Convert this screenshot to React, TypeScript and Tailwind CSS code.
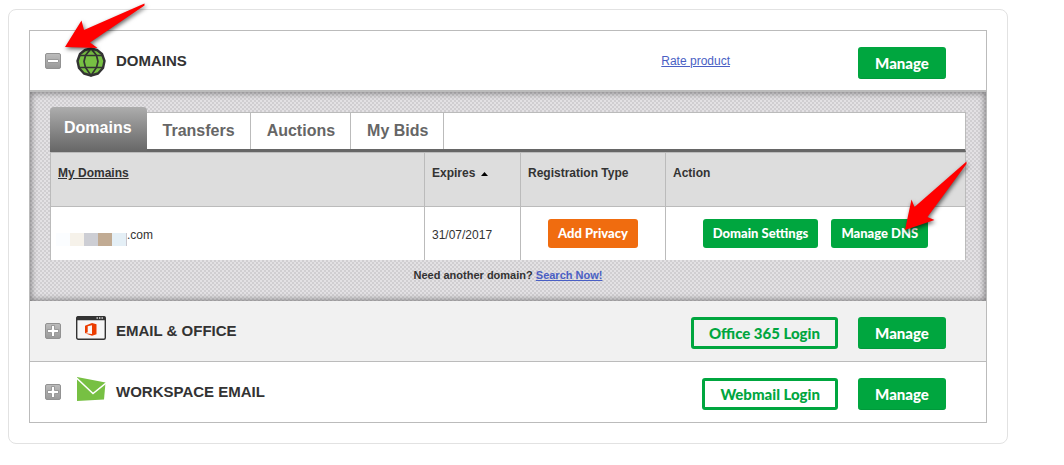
import React from 'react';

type Product = {
  name: string;
  icon: React.ReactNode;
  login: string;
  shaded: boolean;
};

const tabs = ['Transfers', 'Auctions', 'My Bids'];

const maskColors = ['bg-[#fbfdff]', 'bg-[#f6f2ea]', 'bg-[#cdced4]', 'bg-[#c1ab93]', 'bg-[#e4eff6]'];

function GlobeIcon() {
  return (
    <svg viewBox="0 0 30 30" className="h-[30px] w-[30px] shrink-0" fill="none" stroke="#333" strokeWidth="1.7" aria-hidden="true">
      <path d="M15 1.5 21 3 26 7 28.5 14 27 21 22 26.500 15 28.500 8 26.500 3 21 1.500 14 4 7 9 3Z" fill="#77c043" strokeWidth="2.4" strokeLinejoin="round" />
      <path d="M3.500 8.500h23M2.500 20.500h25" />
      <path d="M15 1.500 9.500 8.500 8 14.500 9.500 20.500 15 28.500 20.500 20.500 22 14.500 20.500 8.500Z" />
    </svg>
  );
}

function OfficeIcon() {
  return (
    <svg viewBox="0 0 30 24" className="h-6 w-[30px] shrink-0" aria-hidden="true">
      <rect x="0.700" y="0.700" width="28.600" height="22.600" rx="1.500" fill="#f6f6f6" stroke="#333" strokeWidth="1.400" />
      <path d="M0.500 1.500Q.5.300 2 .3H28Q29.500.3 29.500 1.500V4.300H.5Z" fill="#333" />
      <path d="M20.500 2h1.400M23 2h1.400M25.500 2h1.400" stroke="#ddd" strokeWidth="1.300" />
      <path d="M9 9.800 16 7 20.500 8.300V18.300L16 19.700 9 17.200 16 18V9.200L11.700 10.200V16.200L9 17.200Z" fill="#eb3c00" />
    </svg>
  );
}

function EnvelopeIcon() {
  return (
    <svg viewBox="0 0 30 24" className="h-6 w-[30px] shrink-0" aria-hidden="true">
      <path d="M1 0 29.500 5.500 28 22.500 1 24Z" fill="#77c043" />
      <path d="M0 .5 17 16.500 30 6" fill="none" stroke="#fff" strokeWidth="1.500" />
    </svg>
  );
}

function Toggle({ label, open = false }: { label: string; open?: boolean }) {
  return (
    <button type="button" aria-label={label} aria-expanded={open} className="block h-4 w-4">
      <svg viewBox="0 0 16 16" className="h-4 w-4" aria-hidden="true">
        <defs>
          <linearGradient id="toggle" x2="0" y2="1">
            <stop stopColor="#bdbdbd" />
            <stop offset="1" stopColor="#999" />
          </linearGradient>
        </defs>
        <rect x="0.500" y="0.500" width="15" height="15" rx="1.500" fill="url(#toggle)" stroke="#929292" />
        {open ? (
          <rect x="2.500" y="6.500" width="11" height="3" rx="0.500" fill="#fff" stroke="#8a8a8a" strokeWidth="0.800" />
        ) : (
          <path d="M6.500 2.500h3v4h4v3h-4v4h-3v-4h-4v-3h4Z" fill="#fff" stroke="#8a8a8a" strokeWidth="0.800" />
        )}
      </svg>
    </button>
  );
}

function ManageButton() {
  return (
    <button type="button" className="h-8 w-[88px] rounded-[3px] border-b border-[#009a3b] bg-[#00a63f] font-[Lato,sans-serif] text-[15px] leading-4 font-black text-white">
      Manage
    </button>
  );
}

function ProductRow({ name, icon, login, shaded }: Product) {
  return (
    <div className={`flex items-start border-[#bbb] pt-4 pr-10 pb-3 pl-[15px] ${shaded ? 'border-b bg-[#f1f1f1]' : 'bg-white'}`}>
      <div className="mt-[6px]"><Toggle label={`Expand ${name}`} /></div>
      <div className="-mt-px ml-[15px]">{icon}</div>
      <h2 className="mt-[5px] ml-[10px] flex-1 text-[15px] leading-[18px] font-bold">{name}</h2>
      <button type="button" className="mr-5 h-8 rounded-[3px] border-[3px] border-[#00a63f] px-[15px] font-[Lato,sans-serif] text-[15px] leading-4 font-black text-[#00a63f]">
        {login}
      </button>
      <ManageButton />
    </div>
  );
}

function DomainsPanel() {
  return (
    <div className="bg-[#e3e1e4] bg-[radial-gradient(circle_at_1px_1px,#d0ced1_1px,transparent_1px),radial-gradient(circle_at_3px_3px,#d0ced1_1px,transparent_1px)] bg-[size:4px_4px]">
      <div className="px-5 pt-[15px] pb-[18px] shadow-[inset_0_0_6px_1px_rgba(0,0,0,0.45)]">
        <div className="flex items-end" role="tablist">
          <button type="button" role="tab" aria-selected="true" className="h-[45px] rounded-t-[4px] bg-linear-to-b from-[#adadad] to-[#666] pr-[15px] pb-1 pl-[14px] text-base font-bold text-white">
            Domains
          </button>
          <div className="flex h-10 flex-1 border-t border-r border-b-[3px] border-t-[#bbb] border-r-[#bbb] border-b-[#666] bg-white">
            {tabs.map((tab) => (
              <button key={tab} type="button" role="tab" aria-selected="false" className="border-r border-[#bbb] pr-[15px] pl-4 text-base font-bold text-[#666]">
                {tab}
              </button>
            ))}
          </div>
        </div>
        <table className="w-full table-fixed border-separate border-spacing-0 border-t border-r border-[#bbb] bg-white text-left text-xs [&_td]:border-l [&_td]:border-[#bbb] [&_th]:border-b [&_th]:border-l [&_th]:border-[#bbb]">
          <colgroup>
            <col />
            <col className="w-[96px]" />
            <col className="w-[145px]" />
            <col className="w-[300px]" />
          </colgroup>
          <thead>
            <tr className="h-[54px] bg-[#ddd] align-top [&>th]:px-[7px] [&>th]:pt-3">
              <th><a href="#domains" className="underline">My Domains</a></th>
              <th>
                Expires
                <svg viewBox="0 0 7 4" className="ml-[6px] inline-block h-1 w-[7px]" aria-hidden="true">
                  <path d="M3.500 0 7 4H0Z" fill="#000" />
                </svg>
              </th>
              <th>Registration Type</th>
              <th>Action</th>
            </tr>
          </thead>
          <tbody>
            <tr className="h-[53px]">
              <td className="pt-[6px] pl-[5px]">
                <div className="flex items-start">
                  <div className="mt-[6px] flex h-[13px]">
                    {maskColors.map((color) => <span key={color} className={`w-[14px] ${color}`} />)}
                    <span className="w-px bg-[#c9c7cf]" />
                  </div>
                  <span>.com</span>
                </div>
              </td>
              <td className="pt-[2px] pl-[7px]">31/07/2017</td>
              <td className="text-center">
                <button type="button" className="h-[29px] rounded-[3px] bg-[#f06c0f] px-[10px] font-[Lato,sans-serif] text-[13px] font-black text-white">Add Privacy</button>
              </td>
              <td>
                <div className="flex justify-center gap-[13px]">
                  <button type="button" className="h-[29px] rounded-[3px] bg-[#00a63f] px-[10px] font-[Lato,sans-serif] text-[13px] font-black text-white">Domain Settings</button>
                  <div className="relative">
                    <button type="button" className="h-[29px] rounded-[3px] bg-[#00a63f] px-[10px] font-[Lato,sans-serif] text-[13px] font-black text-white">Manage DNS</button>
                    <svg viewBox="904 160 68 78" className="pointer-events-none absolute -top-[59px] left-[73px] z-10 h-[78px] w-[68px] drop-shadow-[1px_2px_2px_rgba(0,0,0,0.6)]" aria-hidden="true">
                      <path d="M966.500 161.500 914.500 207 911.500 199.500 905 230 934.500 220 927.500 217 966.500 164Z" fill="#f00" />
                    </svg>
                  </div>
                </div>
              </td>
            </tr>
          </tbody>
        </table>
        <p className="mt-[7px] text-center text-[11px] leading-4 font-bold">
          Need another domain? <a href="#search" className="text-[#4a5fc4] underline">Search Now!</a>
        </p>
      </div>
    </div>
  );
}

const products: Product[] = [
  { name: 'EMAIL & OFFICE', icon: <OfficeIcon />, login: 'Office 365 Login', shaded: true },
  { name: 'WORKSPACE EMAIL', icon: <EnvelopeIcon />, login: 'Webmail Login', shaded: false },
];

export default function App() {
  return (
    <div className="bg-white pt-[9px] pr-14 pb-5 pl-2 font-['Liberation_Sans',Arial,sans-serif] text-[#333]">
      <main className="rounded-lg border border-[#e2e2e2] p-5">
        <div className="border border-[#bbb]">
          <div className="flex items-start border-b-2 border-[#bbb] pt-4 pr-10 pb-[11px] pl-[15px]">
            <div className="relative mt-[6px]">
              <Toggle label="Collapse DOMAINS" open />
              <svg viewBox="64 0 86 54" className="pointer-events-none absolute -top-[53px] left-[19px] z-10 h-[54px] w-[86px] drop-shadow-[1px_2px_2px_rgba(0,0,0,0.6)]" aria-hidden="true">
                <path d="M144.500 3.500 84 30 81.500 20.500 65 47 97.500 48 90 42.500 144.500 5.500Z" fill="#f00" />
              </svg>
            </div>
            <div className="ml-[15px]"><GlobeIcon /></div>
            <h2 className="mt-[5px] ml-[10px] flex-1 text-[15px] leading-[18px] font-bold">DOMAINS</h2>
            <a href="#rate" className="mt-[5px] mr-32 text-xs leading-[18px] text-[#4a5fc4] underline">Rate product</a>
            <ManageButton />
          </div>
          <DomainsPanel />
          {products.map((product) => <ProductRow key={product.name} {...product} />)}
        </div>
      </main>
    </div>
  );
}
